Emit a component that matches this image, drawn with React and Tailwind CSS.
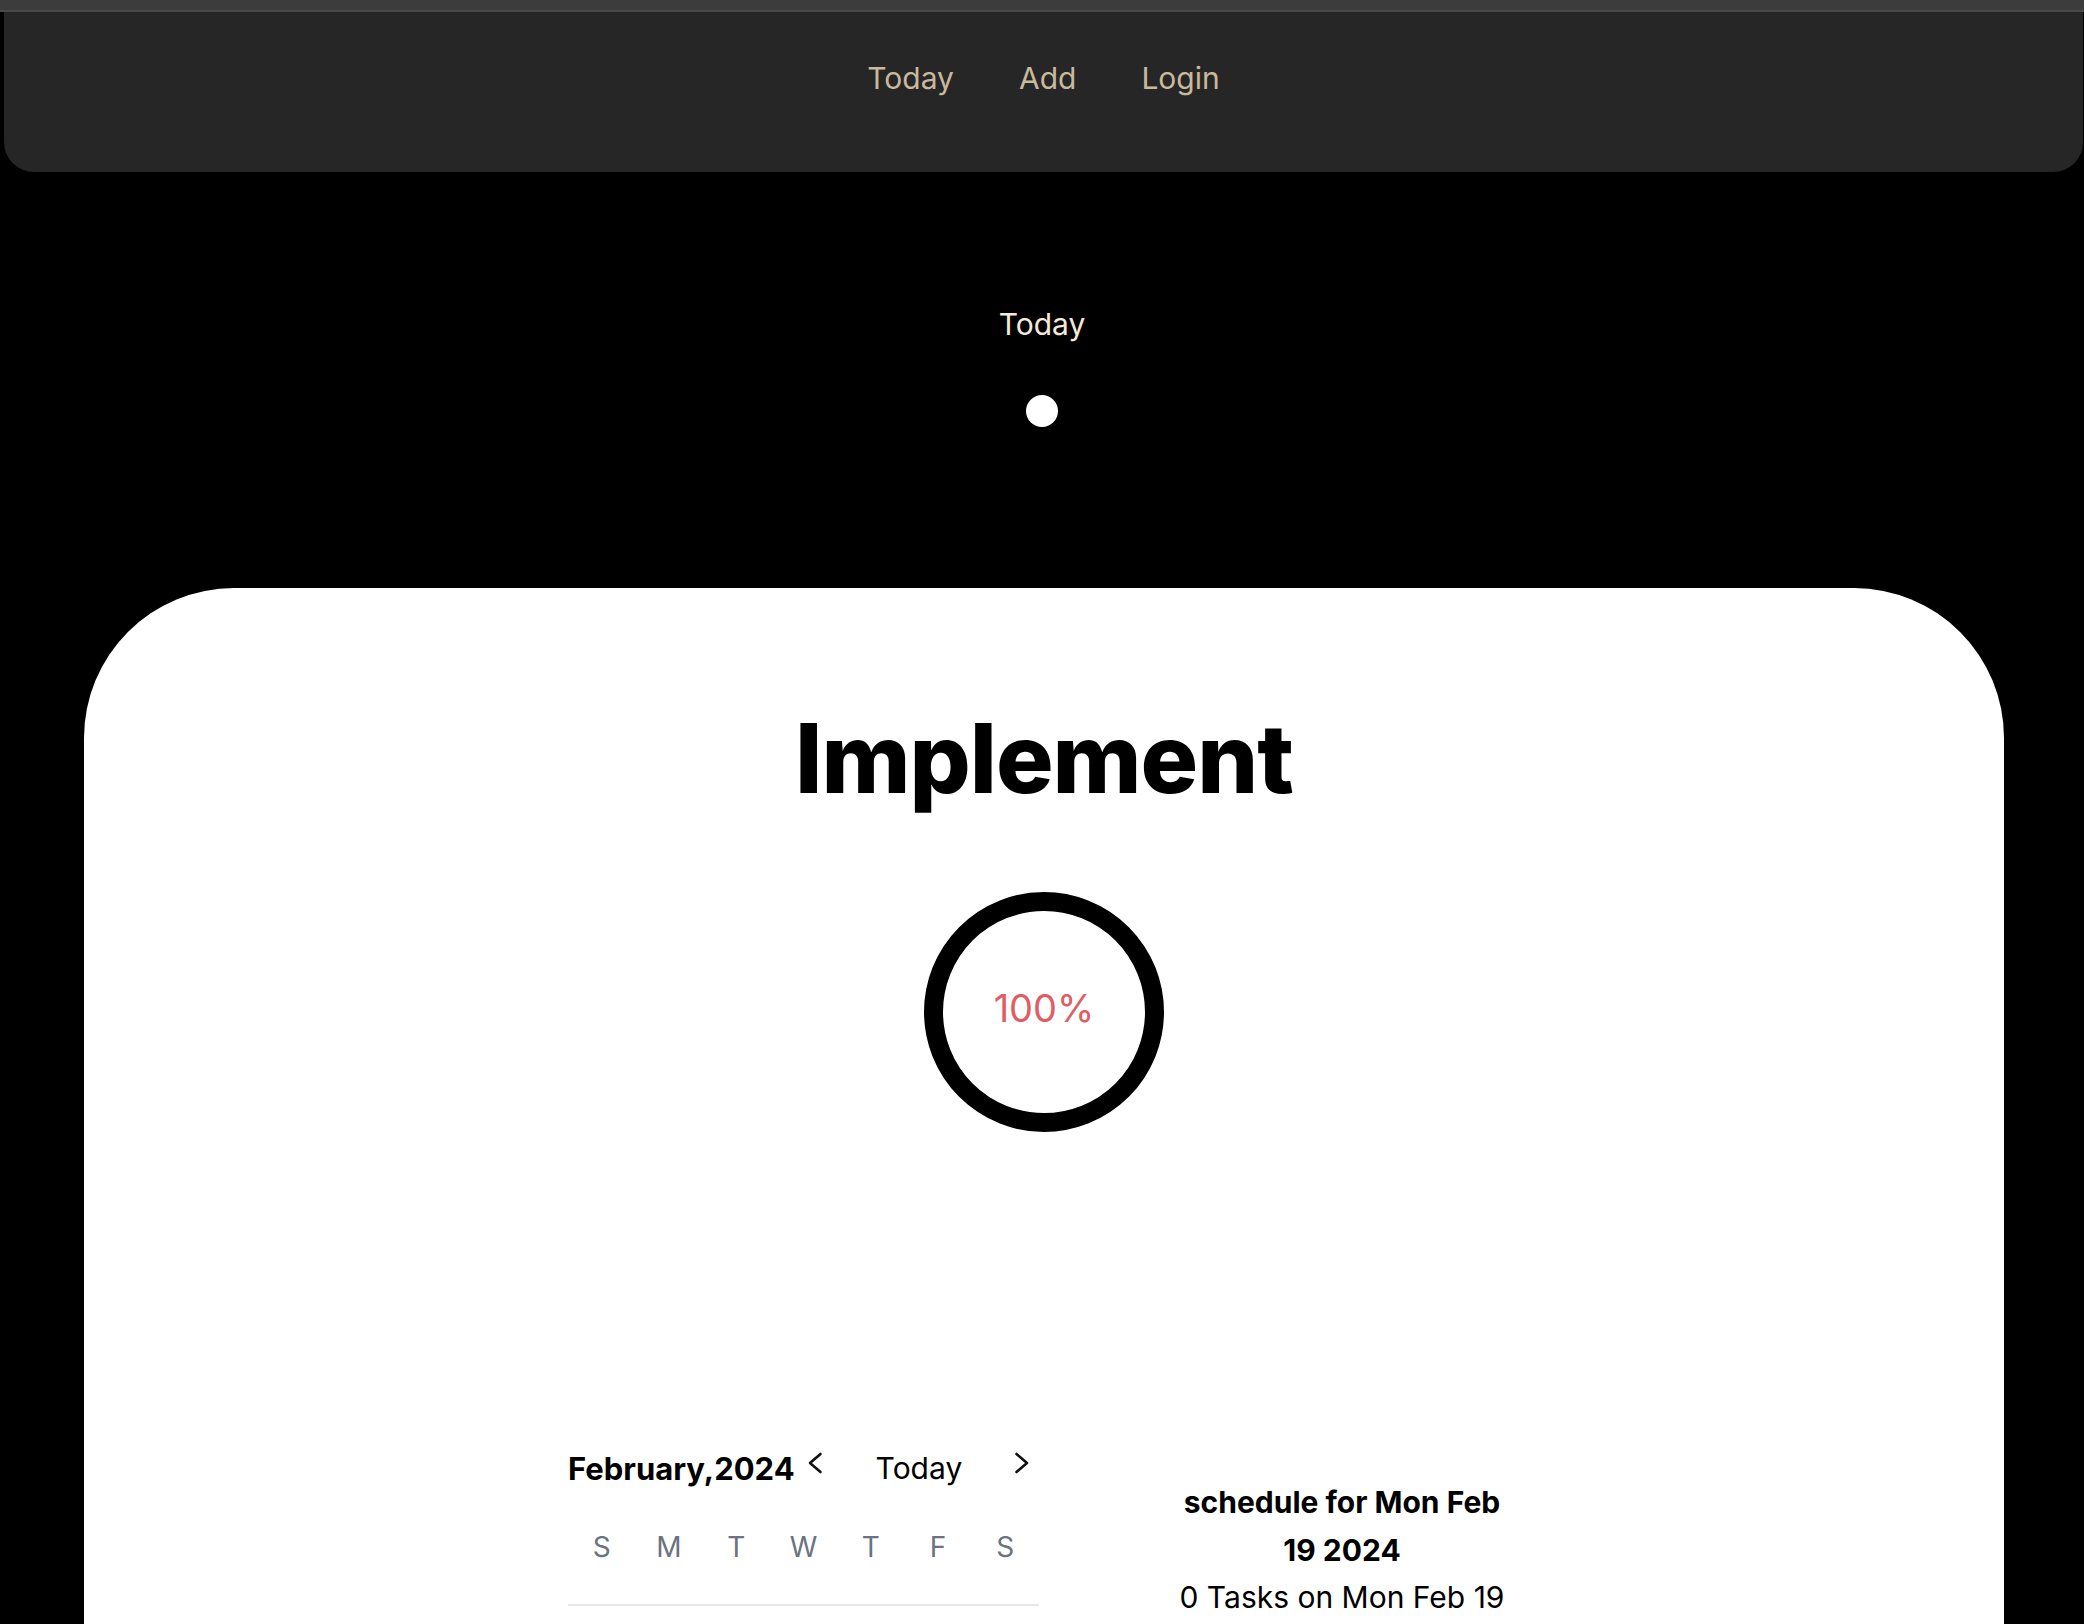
import React from 'react';

const font = { fontFamily: 'Inter, "Noto Sans", sans-serif' };

const NavBar = () => (
  <div className="ml-[4px] mr-[1px] h-[160px] bg-[#262626] rounded-b-[30px] flex justify-center items-start pt-[51px] gap-[65px]">
    {['Today', 'Add', 'Login'].map((item) => (
      <a key={item} className="text-[30px] leading-none text-[#c8b99c] cursor-pointer">
        {item}
      </a>
    ))}
  </div>
);

const Chevron = ({ dir }) => (
  <svg width="16" height="24" viewBox="0 0 16 24" fill="none" stroke="#111" strokeWidth="2.6" strokeLinecap="round" strokeLinejoin="round">
    {dir === 'left' ? <polyline points="13.5,3 3,12 13.5,21" /> : <polyline points="2.5,3 13,12 2.5,21" />}
  </svg>
);

const days = ['S', 'M', 'T', 'W', 'T', 'F', 'S'];

const Calendar = () => (
  <div className="w-[471px]">
    <div className="flex items-start">
      <h2 className="text-[31px] leading-none font-bold text-black">February,2024</h2>
      <button className="ml-[12px] -mt-[2px]"><Chevron dir="left" /></button>
      <button className="ml-[53px] text-[30px] leading-none text-black">Today</button>
      <button className="ml-[52px] -mt-[2px]"><Chevron dir="right" /></button>
    </div>
    <div className="grid grid-cols-7 mt-[49px]">
      {days.map((d, i) => (
        <div key={i} className="text-center text-[28px] leading-none text-[#6b7280]">{d}</div>
      ))}
    </div>
    <div className="mt-[43px] h-[2px] bg-[#e5e7eb]" />
  </div>
);

const Schedule = () => (
  <div className="w-[340px] mt-[25px] text-center text-[30px] leading-[48px] text-black">
    <h3 className="font-bold">schedule for Mon Feb 19 2024</h3>
    <p className="-mt-[1px]">0 Tasks on Mon Feb 19</p>
  </div>
);

export default function App() {
  return (
    <div className="min-h-screen bg-black pb-[80px]" style={font}>
      <div className="h-[10px] bg-[#3c3c3c]" />
      <div className="h-[2px] bg-[#4a4a4a]" />
      <NavBar />

      <div className="flex flex-col items-center mt-[137px]">
        <h1 className="text-[30px] leading-none text-[#f4ead8]">Today</h1>
        <div className="mt-[56px] w-[32px] h-[32px] rounded-full bg-white" />
      </div>

      <div className="mt-[161px] ml-[84px] mr-[80px] bg-white rounded-[150px] pt-[122px] pb-[400px]">
        <h1 className="text-center text-[96px] leading-none font-extrabold text-black tracking-[-1px]">Implement</h1>

        <div className="mt-[86px] mx-auto w-[240px] h-[240px] rounded-full border-[19px] border-black flex items-center justify-center">
          <span className="text-[38px] leading-none text-[#df5d63] pb-[8px]">100%</span>
        </div>

        <div className="mt-[321px] flex justify-center items-start gap-[133px] pr-[8px]">
          <Calendar />
          <Schedule />
        </div>
      </div>
    </div>
  );
}
